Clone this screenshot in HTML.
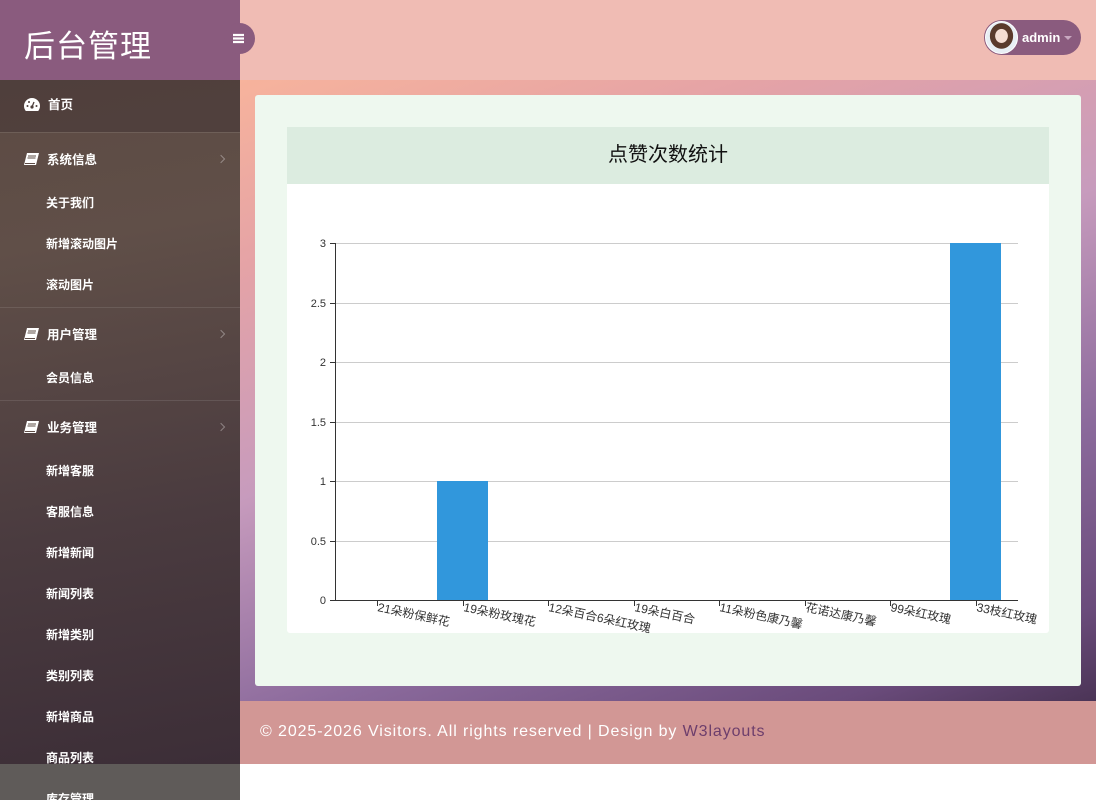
<!DOCTYPE html>
<html><head><meta charset="utf-8"><style>
*{margin:0;padding:0;box-sizing:border-box}
body{width:1096px;height:800px;overflow:hidden;font-family:"Liberation Sans","Noto Sans CJK SC",sans-serif;background:#fff;position:relative}
.side{position:absolute;left:0;top:0;width:240px;height:800px;background:linear-gradient(170deg,#5a4841 0%,#604f48 30%,#4a3b3f 65%,#3a2c36 100%);overflow:hidden}
.logo{height:80px;background:#8a5b7e;color:#fff;font-size:31px;padding:21px 0 0 24px;letter-spacing:1px}
.top{background:rgba(70,55,55,.55);height:52px}
.it{position:absolute;left:0;color:#fff;font-size:12.5px;font-weight:bold;margin-top:-2px}
.sec{left:24px}
.sec svg{vertical-align:-2px;margin-right:8px}
.sub{left:46px;font-size:12px}
.sep{position:absolute;left:0;width:240px;height:1px;background:rgba(255,255,255,.1)}
.arr{position:absolute;left:218px;width:6px;height:6px;border-right:1px solid rgba(255,255,255,.35);border-top:1px solid rgba(255,255,255,.35);transform:rotate(45deg)}
.hdr{position:absolute;left:240px;top:0;width:856px;height:80px;background:#f0bcb4}
.main{position:absolute;left:240px;top:80px;width:856px;height:621px;background:linear-gradient(160deg,#f7b39c 0%,#e5a3a6 20%,#c79bbd 45%,#8b6a9c 70%,#6a4b7b 90%,#4b3456 100%)}
.card{position:absolute;left:15px;top:15px;width:826px;height:591px;background:#eef8ef;border-radius:3px}
.panel{position:absolute;left:32px;top:32px;width:762px;height:506px;background:#fff;border-radius:3px}
.ph{height:57px;background:#dcece0;text-align:center;font-size:20px;line-height:57px;color:#111}
.foot{position:absolute;left:240px;top:701px;width:856px;height:63px;background:#d29795;color:#fff;font-size:16px;padding:22px 0 0 20px;letter-spacing:.9px}
.foot a{color:#6d3e6c;text-decoration:none}
.tog{position:absolute;left:224px;top:23px;width:31px;height:31px;border-radius:16px;background:#8a5b7e}
.user{position:absolute;left:984px;top:20px;width:97px;height:35px;border-radius:18px;background:#8a5b7e}
.av{position:absolute;left:1px;top:1px;width:33px;height:33px;border-radius:50%;background:radial-gradient(ellipse at 50% 45%,#f5ddd3 0 28%,#5a3a2c 30% 52%,#e8eef4 54%);border:1px solid #fff}
.un{position:absolute;left:38px;top:10px;color:#fff;font-size:13px;font-weight:bold}
.car{position:absolute;left:80px;top:16px;border:4px solid transparent;border-top:4px solid #c8a8c0}
.bot{position:absolute;left:0;top:764px;width:240px;height:36px;background:#5f5b59}
</style></head><body>
<div class="side">
<div class="logo">后台管理</div>
<div class="top"></div>
<div class="it sec" style="top:96px"><svg width="16" height="13" viewBox="0 0 16 13"><path d="M8 0A8 8 0 0 0 0 8c0 2 .7 3.6 1.8 5h12.4A8 8 0 0 0 16 8 8 8 0 0 0 8 0z" fill="#fff"/><circle cx="8" cy="9" r="1.6" fill="#4f403d"/><path d="M8 9L10 4" stroke="#4f403d" stroke-width="1.3"/><circle cx="3.5" cy="8" r="1" fill="#4f403d"/><circle cx="5" cy="4" r="1" fill="#4f403d"/><circle cx="12.5" cy="8" r="1" fill="#4f403d"/></svg>首页</div>
<div class="sep" style="top:132px"></div>
<div class="it sec" style="top:151px"><svg width="15" height="13" viewBox="0 0 15 13"><path d="M3 0h12l-3 12H0z" fill="#fff"/><path d="M4 3h8M3.5 5h8" stroke="#5d4c46" stroke-width="1"/><path d="M1 10.5h10" stroke="#5d4c46" stroke-width="1"/></svg>系统信息</div><div class="arr" style="top:156px"></div>
<div class="it sub" style="top:196px">关于我们</div>
<div class="it sub" style="top:237px">新增滚动图片</div>
<div class="it sub" style="top:278px">滚动图片</div>
<div class="sep" style="top:307px"></div>
<div class="it sec" style="top:326px"><svg width="15" height="13" viewBox="0 0 15 13"><path d="M3 0h12l-3 12H0z" fill="#fff"/><path d="M4 3h8M3.5 5h8" stroke="#5d4c46" stroke-width="1"/><path d="M1 10.5h10" stroke="#5d4c46" stroke-width="1"/></svg>用户管理</div><div class="arr" style="top:331px"></div>
<div class="it sub" style="top:371px">会员信息</div>
<div class="sep" style="top:400px"></div>
<div class="it sec" style="top:419px"><svg width="15" height="13" viewBox="0 0 15 13"><path d="M3 0h12l-3 12H0z" fill="#fff"/><path d="M4 3h8M3.5 5h8" stroke="#5d4c46" stroke-width="1"/><path d="M1 10.5h10" stroke="#5d4c46" stroke-width="1"/></svg>业务管理</div><div class="arr" style="top:424px"></div>
<div class="it sub" style="top:464px">新增客服</div>
<div class="it sub" style="top:505px">客服信息</div>
<div class="it sub" style="top:546px">新增新闻</div>
<div class="it sub" style="top:587px">新闻列表</div>
<div class="it sub" style="top:628px">新增类别</div>
<div class="it sub" style="top:669px">类别列表</div>
<div class="it sub" style="top:710px">新增商品</div>
<div class="it sub" style="top:751px">商品列表</div>
<div class="bot"></div>
<div class="it sub" style="top:792px">库存管理</div>
</div>
<div class="hdr"></div>
<div class="tog"><svg width="31" height="31"><path d="M9 12h11M9 15.5h11M9 19h11" stroke="#fff" stroke-width="2.2"/></svg></div>
<div class="user"><div class="av"></div><div class="un">admin</div><div class="car"></div></div>
<div class="main"><div class="card"><div class="panel"><div class="ph">点赞次数统计</div></div></div></div>
<svg style="position:absolute;left:0;top:0" width="1096" height="800" font-family="Liberation Sans,Noto Sans CJK SC,sans-serif">
<g stroke="#ccc" stroke-width="1">
<line x1="335" y1="243.5" x2="1018" y2="243.5"/><line x1="335" y1="303.5" x2="1018" y2="303.5"/><line x1="335" y1="362.5" x2="1018" y2="362.5"/><line x1="335" y1="422.5" x2="1018" y2="422.5"/><line x1="335" y1="481.5" x2="1018" y2="481.5"/><line x1="335" y1="541.5" x2="1018" y2="541.5"/>
</g>
<rect x="437" y="481" width="51" height="119" fill="#3197dc"/>
<rect x="950" y="243" width="51" height="357" fill="#3197dc"/>
<g stroke="#333" stroke-width="1">
<line x1="335.5" y1="243" x2="335.5" y2="600"/><line x1="335" y1="600.5" x2="1018" y2="600.5"/>
<line x1="330" y1="243.5" x2="335" y2="243.5"/><line x1="330" y1="303.5" x2="335" y2="303.5"/><line x1="330" y1="362.5" x2="335" y2="362.5"/><line x1="330" y1="422.5" x2="335" y2="422.5"/><line x1="330" y1="481.5" x2="335" y2="481.5"/><line x1="330" y1="541.5" x2="335" y2="541.5"/><line x1="330" y1="600.5" x2="335" y2="600.5"/>
<line x1="377.5" y1="600" x2="377.5" y2="606"/><line x1="463.5" y1="600" x2="463.5" y2="606"/><line x1="548.5" y1="600" x2="548.5" y2="606"/><line x1="634.5" y1="600" x2="634.5" y2="606"/><line x1="719.5" y1="600" x2="719.5" y2="606"/><line x1="805.5" y1="600" x2="805.5" y2="606"/><line x1="890.5" y1="600" x2="890.5" y2="606"/><line x1="976.5" y1="600" x2="976.5" y2="606"/>
</g>
<g font-size="11" fill="#333" text-anchor="end">
<text x="326" y="247">3</text><text x="326" y="307">2.5</text><text x="326" y="366">2</text><text x="326" y="426">1.5</text><text x="326" y="485">1</text><text x="326" y="545">0.5</text><text x="326" y="604">0</text>
</g>
<g font-size="12" fill="#333">
<text transform="translate(377,611) rotate(12)">21朵粉保鲜花</text>
<text transform="translate(463,611) rotate(12)">19朵粉玫瑰花</text>
<text transform="translate(548,611) rotate(12)">12朵百合6朵红玫瑰</text>
<text transform="translate(634,611) rotate(12)">19朵白百合</text>
<text transform="translate(719,611) rotate(12)">11朵粉色康乃馨</text>
<text transform="translate(805,611) rotate(12)">花诺达康乃馨</text>
<text transform="translate(890,611) rotate(12)">99朵红玫瑰</text>
<text transform="translate(976,611) rotate(12)">33枝红玫瑰</text>
</g>
</svg>
<div class="foot">© 2025-2026 Visitors. All rights reserved | Design by <a>W3layouts</a></div>
</body></html>
